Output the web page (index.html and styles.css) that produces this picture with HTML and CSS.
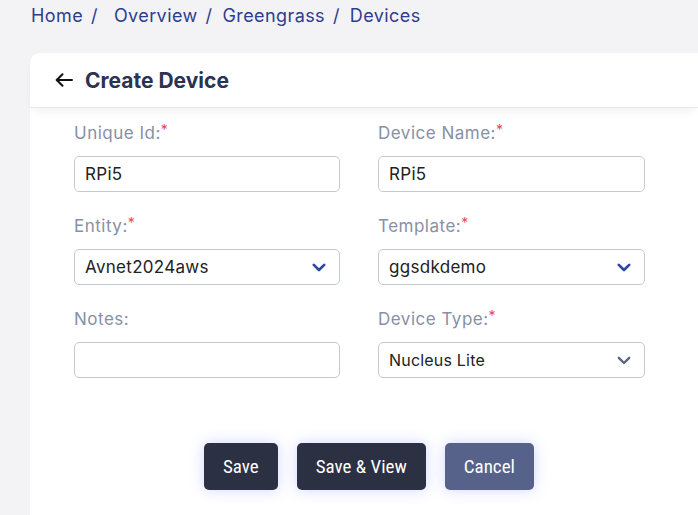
FILE: index.html
```html
<!DOCTYPE html>
<html>
<head>
<meta charset="utf-8">
<link rel="stylesheet" href="styles.css">
</head>
<body>
<nav class="crumbs">
  <a>Home</a><span class="sep">/</span><span class="gap"></span><a>Overview</a><span class="sep">/</span><a>Greengrass</a><span class="sep">/</span><a>Devices</a>
</nav>
<section class="card">
  <header class="card-head">
    <svg class="back" width="18" height="14" viewBox="0 0 18 14"><path d="M17 7H2M7.5 1.2L1.7 7l5.8 5.8" fill="none" stroke="#111" stroke-width="2" stroke-linecap="round" stroke-linejoin="round"/></svg>
    <h1>Create Device</h1>
  </header>
  <div class="form">
    <div class="field">
      <label>Unique Id:<span class="req">*</span></label>
      <div class="control">RPi5</div>
    </div>
    <div class="field">
      <label>Device Name:<span class="req">*</span></label>
      <div class="control">RPi5</div>
    </div>
    <div class="field">
      <label>Entity:<span class="req">*</span></label>
      <div class="control select">Avnet2024aws<svg class="chev" width="14" height="9" viewBox="0 0 14 9"><path d="M1.8 1.8L7 7l5.2-5.2" fill="none" stroke="#2c47a3" stroke-width="2.6" stroke-linecap="round" stroke-linejoin="round"/></svg></div>
    </div>
    <div class="field">
      <label>Template:<span class="req">*</span></label>
      <div class="control select">ggsdkdemo<svg class="chev" width="14" height="9" viewBox="0 0 14 9"><path d="M1.8 1.8L7 7l5.2-5.2" fill="none" stroke="#2c47a3" stroke-width="2.6" stroke-linecap="round" stroke-linejoin="round"/></svg></div>
    </div>
    <div class="field">
      <label>Notes:</label>
      <div class="control"></div>
    </div>
    <div class="field">
      <label>Device Type:<span class="req">*</span></label>
      <div class="control select small">Nucleus Lite<svg class="chev" width="14" height="9" viewBox="0 0 14 9"><path d="M1.8 1.8L7 7l5.2-5.2" fill="none" stroke="#5d6584" stroke-width="2.4" stroke-linecap="round" stroke-linejoin="round"/></svg></div>
    </div>
  </div>
  <div class="actions">
    <button class="btn dark">Save</button>
    <button class="btn dark">Save &amp; View</button>
    <button class="btn muted">Cancel</button>
  </div>
</section>
</body>
</html>
```

FILE: styles.css
```css
html, body {
  margin: 0;
  padding: 0;
  background: #f3f3f6;
  font-family: Inter, "Noto Sans", sans-serif;
  height: 100%;
  overflow: hidden;
}
.crumbs {
  height: 53px;
  box-sizing: border-box;
  padding: 4px 0 0 31px;
  font-size: 18px;
  line-height: 24px;
  letter-spacing: 0.4px;
  color: #2f3c8f;
  display: flex;
  align-items: flex-start;
}
.crumbs .sep {
  margin: 0 10px 0 8px;
}
.crumbs .gap {
  width: 6px;
}
.card {
  margin-left: 30px;
  background: #fff;
  border-top-left-radius: 10px;
  height: 470px;
}
.card-head {
  height: 55px;
  box-sizing: border-box;
  display: flex;
  align-items: center;
  padding-left: 25px;
  border-bottom: 1px solid #e6e7ef;
  box-shadow: 0 6px 10px -4px rgba(40, 40, 80, 0.08);
  position: relative;
}
.back {
  margin-right: 12px;
}
.card-head h1 {
  margin: 0;
  font-size: 21px;
  font-weight: 700;
  color: #2a3352;
}
.form {
  padding: 13px 0 0 44px;
  display: grid;
  grid-template-columns: 266px 267px;
  column-gap: 38px;
}
.field {
  display: flex;
  flex-direction: column;
  margin-bottom: 22px;
}
.field label {
  font-size: 17px;
  line-height: 24px;
  height: 24px;
  letter-spacing: 0.5px;
  color: #8790a6;
  margin-bottom: 11px;
}
.req {
  color: #e5475d;
  font-size: 14px;
  line-height: 0;
  vertical-align: 4px;
}
.control {
  height: 36px;
  box-sizing: border-box;
  border: 1px solid #c3cbcf;
  border-radius: 5px;
  padding: 0 10px;
  display: flex;
  align-items: center;
  justify-content: space-between;
  font-size: 17px;
  letter-spacing: 0.3px;
  color: #222;
}
.control.small {
  font-size: 16px;
  letter-spacing: 0.2px;
}
.chev {
  margin-right: 3px;
}
.actions {
  display: flex;
  gap: 19px;
  padding: 43px 0 0 174px;
}
.btn {
  height: 47px;
  border: none;
  border-radius: 5px;
  color: #fff;
  font-family: "Roboto Condensed", Roboto, sans-serif;
  font-size: 19px;
  padding: 0 19px;
  box-shadow: 0 0 14px rgba(90, 110, 255, 0.28);
}
.btn.dark {
  background: #2b3043;
}
.btn.muted {
  background: #57628a;
}
```
